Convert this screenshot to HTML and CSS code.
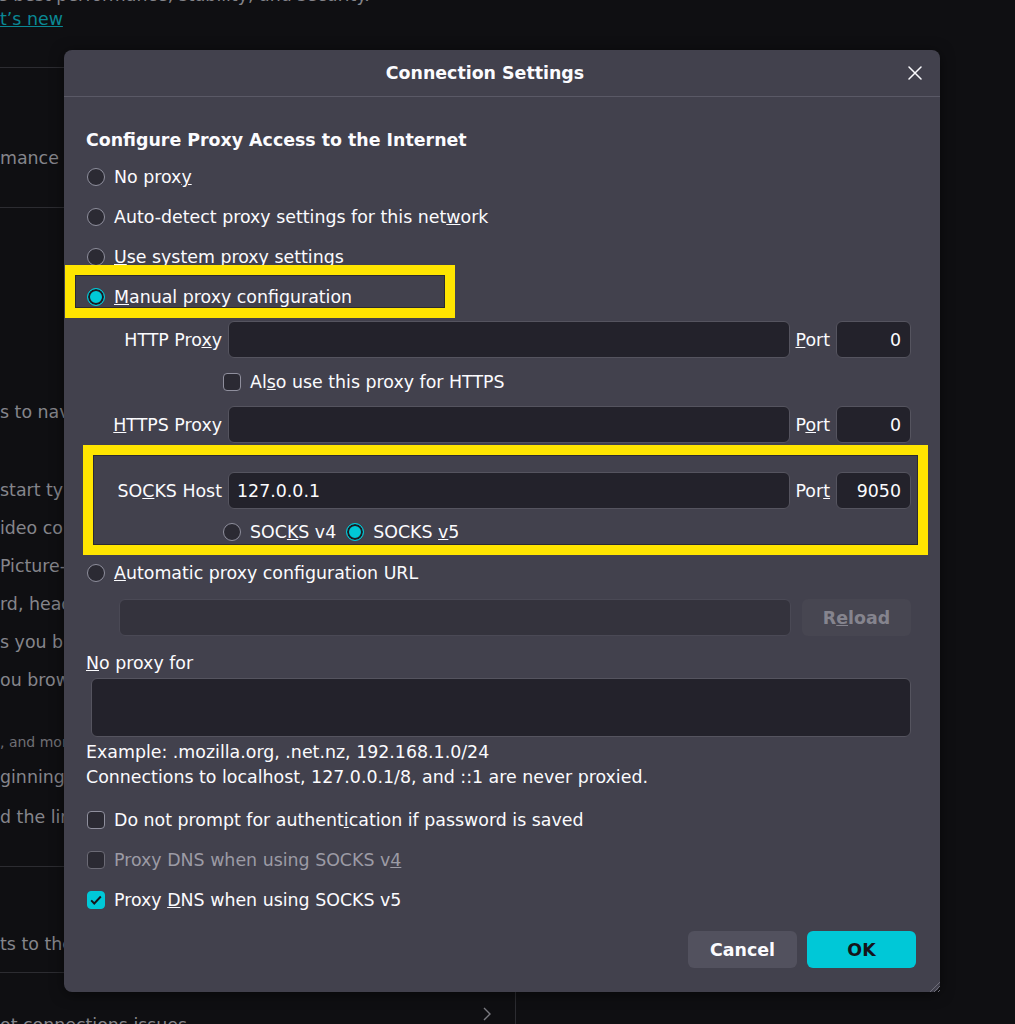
FILE: index.html
```html
<!DOCTYPE html>
<html lang="en">
<head>
    <meta charset="UTF-8">
    <meta name="viewport" content="width=device-width, initial-scale=1.0">
    <title>Connection Settings</title>
    <link rel="stylesheet" href="styles.css">
</head>
<body>
    <!-- page behind the modal -->
    <div class="page">
        <p class="bg-text top-line">e best performance, stability, and security.</p>
        <p class="bg-text"><a class="bg-link">t’s new</a></p>
        <hr class="bg-rule rule-1">
        <p class="bg-text perf">mance settings</p>
        <hr class="bg-rule rule-2">
        <p class="bg-text nav">s to navigate pages</p>
        <ul class="bg-list">
            <li>start typing</li>
            <li>ideo controls</li>
            <li>Picture-in-Picture</li>
            <li>rd, headset, or remote</li>
            <li>s you browse</li>
            <li>ou browse</li>
        </ul>
        <p class="bg-small">, and more</p>
        <ul class="bg-list tight">
            <li>ginning of the page</li>
            <li>d the links</li>
        </ul>
        <hr class="bg-rule rule-3">
        <p class="bg-text reach">ts to the internet</p>
        <hr class="bg-rule rule-4">
        <div class="bg-row">
            <span>ot connections issues</span>
            <svg width="10" height="14" viewBox="0 0 10 14"><path d="M2 1l6 6-6 6" fill="none" stroke="#7a7a80" stroke-width="1.4"/></svg>
        </div>
    </div>

    <div class="dialog">
        <header class="dialog-head">
            <h1>Connection Settings</h1>
            <button class="close" type="button">
                <svg width="14" height="14" viewBox="0 0 14 14"><path d="M1 1L13 13M13 1L1 13" stroke="#fbfbfe" stroke-width="1.5" stroke-linecap="round"/></svg>
            </button>
        </header>

        <div class="dialog-body">
            <h2>Configure Proxy Access to the Internet</h2>
            <div class="options">
                <label class="option"><span class="radio"></span><span>No prox<u>y</u></span></label>
                <label class="option"><span class="radio"></span><span>Auto-detect proxy settings for this net<u>w</u>ork</span></label>
                <label class="option"><span class="radio"></span><span><u>U</u>se system proxy settings</span></label>
                <label class="option"><span class="radio on"></span><span><u>M</u>anual proxy configuration</span></label>
            </div>

            <div class="proxy-grid">
                <label class="field-label">HTTP Pro<u>x</u>y</label>
                <input class="text-input" type="text" value="">
                <label class="port-label"><u>P</u>ort</label>
                <input class="text-input port-input" type="text" value="0">

                <label class="option sub-row"><span class="check"></span><span>Al<u>s</u>o use this proxy for HTTPS</span></label>

                <label class="field-label"><u>H</u>TTPS Proxy</label>
                <input class="text-input" type="text" value="">
                <label class="port-label">P<u>o</u>rt</label>
                <input class="text-input port-input" type="text" value="0">

                <label class="field-label socks">SO<u>C</u>KS Host</label>
                <input class="text-input socks" type="text" value="127.0.0.1">
                <label class="port-label socks">Por<u>t</u></label>
                <input class="text-input port-input socks" type="text" value="9050">

                <div class="socks-versions">
                    <label class="option"><span class="radio"></span><span>SOC<u>K</u>S v4</span></label>
                    <label class="option"><span class="radio on"></span><span>SOCKS <u>v</u>5</span></label>
                </div>
            </div>

            <label class="option auto-row"><span class="radio"></span><span><u>A</u>utomatic proxy configuration URL</span></label>
            <div class="url-row">
                <input class="text-input" type="text" value="" disabled>
                <button class="btn reload" type="button" disabled>R<u>e</u>load</button>
            </div>

            <label class="no-proxy-label"><u>N</u>o proxy for</label>
            <textarea class="no-proxy"></textarea>
            <p class="hint">Example: .mozilla.org, .net.nz, 192.168.1.0/24<br>Connections to localhost, 127.0.0.1/8, and ::1 are never proxied.</p>

            <div class="checks">
                <label class="option"><span class="check"></span><span>Do not prompt for authent<u>i</u>cation if password is saved</span></label>
                <label class="option disabled"><span class="check"></span><span>Proxy DNS when using SOCKS v<u>4</u></span></label>
                <label class="option"><span class="check on"><svg width="14" height="14" viewBox="0 0 16 16"><path d="M2.5 8.5l3.5 3.5 7.5-8" fill="none" stroke="#15141a" stroke-width="2.2"/></svg></span><span>Proxy <u>D</u>NS when using SOCKS v5</span></label>
            </div>

            <div class="actions">
                <button class="btn cancel" type="button">Cancel</button>
                <button class="btn ok" type="button">OK</button>
            </div>
        </div>

        <svg class="grip" width="12" height="12" viewBox="0 0 12 12"><path d="M12 2L2 12M12 6L6 12M12 10L10 12" stroke="#6d6c78" stroke-width="1"/></svg>
    </div>

    <!-- highlight marks drawn over the screenshot -->
    <div class="mark mark-manual"></div>
    <div class="mark mark-socks"></div>
</body>
</html>
```

FILE: styles.css
```css
* {
    box-sizing: border-box;
}
html, body {
    margin: 0;
    height: 100%;
}
body {
    position: relative;
    overflow: hidden;
    background: #0f0f12;
    color: #fbfbfe;
    font-family: "DejaVu Sans", sans-serif;
    font-size: 17.4px;
}

/* background page */
.page {
    width: 516px;
    color: #85858b;
    white-space: nowrap;
}
.bg-text {
    margin: 0;
    line-height: 24px;
}
.top-line {
    margin-top: -17px;
    text-indent: -3px;
}
.bg-link {
    color: #0a8894;
    text-decoration: underline;
}
.bg-rule {
    margin: 0;
    border: 0;
    height: 1px;
    background: #2c2c31;
}
.rule-1 { margin-top: 36px; }
.perf { margin-top: 78px; }
.rule-2 { margin-top: 37px; }
.nav { margin-top: 192px; }
.bg-list {
    list-style: none;
    margin: 47px 0 0;
    padding: 0;
    line-height: 38px;
}
.bg-list.tight {
    margin-top: 3px;
    line-height: 40px;
}
.bg-small {
    margin: 31px 0 0;
    font-size: 14px;
    line-height: 24px;
    color: #6f6f75;
}
.rule-3 { margin-top: 29px; }
.reach { margin-top: 65px; }
.rule-4 { margin-top: 16px; }
.bg-row {
    display: flex;
    justify-content: space-between;
    height: 60px;
    padding: 34px 23px 0 0;
    border-right: 1px solid #2c2c31;
}
.bg-row span {
    margin-top: 8px;
}

/* dialog */
.dialog {
    position: absolute;
    left: 64px;
    top: 50px;
    width: 876px;
    background: #42414d;
    border-radius: 8px;
    box-shadow: 0 2px 14px rgba(0, 0, 0, 0.5);
}
.dialog-head {
    display: flex;
    align-items: center;
    height: 47px;
    padding-right: 16px;
    border-bottom: 1px solid #5a5966;
}
.dialog-head h1 {
    flex: 1;
    margin: 0;
    text-align: center;
    font-size: 17.4px;
}
.close {
    display: flex;
    align-items: center;
    justify-content: center;
    width: 18px;
    height: 18px;
    padding: 0;
    border: 0;
    background: none;
}
.dialog-body {
    padding: 33px 29px 24px 22px;
}
.dialog-body h2 {
    margin: 0;
    font-size: 17.4px;
    line-height: 20px;
}
.options {
    margin-top: 7px;
}
.option {
    display: flex;
    align-items: center;
    gap: 9px;
    height: 40px;
    white-space: nowrap;
}
.option.disabled {
    color: #9c9ba5;
}

.radio, .check {
    flex: none;
    width: 18px;
    height: 18px;
    margin-left: 1px;
    border: 1px solid #8f8f9d;
    background: #2b2a33;
}
.radio {
    border-radius: 50%;
}
.radio.on {
    border-color: #00c8d7;
    background: #00c8d7;
    box-shadow: inset 0 0 0 2px #1c1b22;
}
.check {
    display: flex;
    align-items: center;
    justify-content: center;
    border-radius: 4px;
}
.check.on {
    border-color: #00c8d7;
    background: #00c8d7;
}
.disabled .check {
    border-color: #6b6a75;
}

/* proxy fields */
.proxy-grid {
    display: grid;
    grid-template-columns: 114px 1fr auto 75px;
    grid-template-rows: 37px 48px 37px 29px 37px 46px;
    column-gap: 6px;
    align-items: center;
    margin: 4px 0 0 22px;
}
.field-label {
    text-align: right;
    white-space: nowrap;
}
.port-label {
    white-space: nowrap;
}
.socks {
    grid-row: 5;
}
.sub-row {
    grid-column: 2 / 5;
    height: auto;
    margin-left: -6px;
}
.socks-versions {
    grid-row: 6;
    grid-column: 2 / 5;
    display: flex;
    gap: 9px;
    margin-left: -6px;
}
.text-input {
    width: 100%;
    height: 37px;
    padding: 0 8px;
    border: 1px solid #55545f;
    border-radius: 6px;
    background: #23222b;
    color: #fbfbfe;
    font: inherit;
}
.port-input {
    text-align: right;
    padding-right: 9px;
}
.text-input:disabled {
    background: #34333d;
    border-color: #4a4955;
}

.auto-row {
    height: 36px;
}
.url-row {
    display: flex;
    gap: 11px;
    margin: 8px 0 0 33px;
}
.url-row .text-input {
    flex: 1;
}
.btn {
    height: 37px;
    width: 109px;
    padding: 0;
    border: 0;
    border-radius: 6px;
    font: inherit;
    font-weight: bold;
}
.reload {
    background: #474651;
    color: #85848e;
}
.no-proxy-label {
    display: block;
    margin-top: 13px;
    line-height: 28px;
}
.no-proxy {
    display: block;
    width: calc(100% - 5px);
    height: 59px;
    margin: 1px 0 0 5px;
    border: 1px solid #55545f;
    border-radius: 6px;
    background: #23222b;
    resize: none;
}
.hint {
    margin: 3px 0 0;
    line-height: 25px;
}
.checks {
    margin-top: 10px;
}
.actions {
    display: flex;
    justify-content: flex-end;
    gap: 10px;
    margin: 11px -5px 0 0;
}
.cancel {
    background: #52515e;
    color: #fbfbfe;
}
.ok {
    background: #00c8d7;
    color: #15141a;
}
.grip {
    position: absolute;
    right: 0;
    bottom: 0;
}

/* yellow highlight boxes */
.mark {
    position: absolute;
    border: 10px solid #ffe500;
    box-shadow: inset 0 0 0 1px rgba(0, 0, 0, 0.35);
}
.mark-manual {
    left: 65px;
    top: 265px;
    width: 390px;
    height: 53px;
}
.mark-socks {
    left: 83px;
    top: 445px;
    width: 845px;
    height: 110px;
}
```
